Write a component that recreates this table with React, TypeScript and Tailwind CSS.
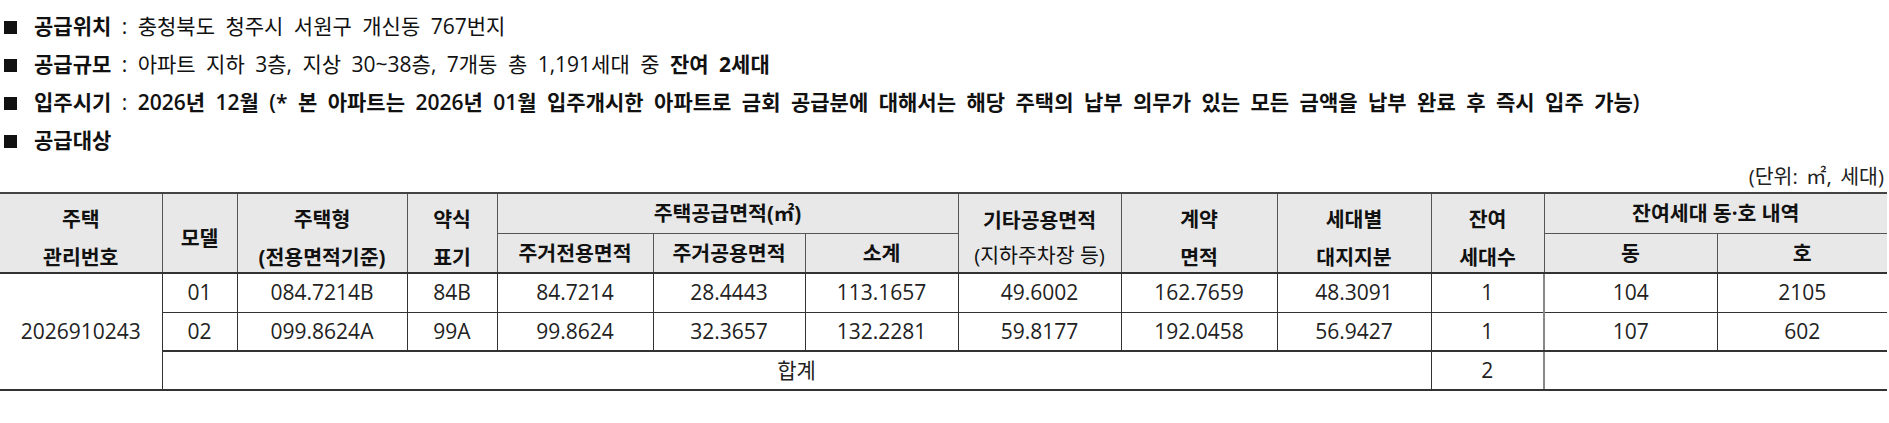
import React from "react";

const FONT = "font-['Open_Sans','Noto_Sans_CJK_KR',sans-serif]";

function Bullet({ children }: { children: React.ReactNode }) {
  return (
    <div className="flex items-center h-[38px] text-[21px] text-[#111] whitespace-nowrap [word-spacing:5px]">
      <span className="w-[13px] h-[13px] bg-[#111] ml-[4px] mr-[17px] shrink-0" />
      <span>{children}</span>
    </div>
  );
}

const th = "bg-[#e8e8e8] font-bold text-[20.5px] text-[#111] border-r border-b border-[#555] p-0 leading-[36px] align-middle";
const td = "text-[21px] text-[#222] font-normal border-r border-b border-[#333] p-0 h-[39px] text-center align-middle";
const span2 = "h-[78px] flex flex-col items-center justify-center pt-[9px] leading-[38px] whitespace-nowrap";
const tall = `${th} border-t-2 border-t-[#444] border-b-2 border-b-[#333]`;

const rows = [
  { model: "01", type: "084.7214B", abbr: "84B", a: "84.7214", b: "28.4443", c: "113.1657", d: "49.6002", e: "162.7659", f: "48.3091", n: "1", dong: "104", ho: "2105" },
  { model: "02", type: "099.8624A", abbr: "99A", a: "99.8624", b: "32.3657", c: "132.2281", d: "59.8177", e: "192.0458", f: "56.9427", n: "1", dong: "107", ho: "602" },
];

export default function App() {
  return (
    <div className={`${FONT} bg-white w-[1889px] h-[423px] overflow-hidden`}>
      <div className="pt-[8px]">
        <Bullet>
          <b className="font-bold">공급위치</b> : 충청북도 청주시 서원구 개신동 767번지
        </Bullet>
        <Bullet>
          <b className="font-bold">공급규모</b> : 아파트 지하 3층, 지상 30~38층, 7개동 총 1,191세대 중 <b className="font-bold">잔여 2세대</b>
        </Bullet>
        <Bullet>
          <span className="font-semibold">입주시기</span> :{" "}
          <span className="font-semibold">
            2026년 12월 (* 본 아파트는 2026년 01월 입주개시한 아파트로 금회 공급분에 대해서는 해당 주택의 납부 의무가 있는 모든 금액을 납부 완료 후 즉시 입주 가능)
          </span>
        </Bullet>
        <Bullet>
          <b className="font-bold">공급대상</b>
        </Bullet>
      </div>
      <div className="h-[32px] flex items-center justify-end pr-[5px] text-[20.5px] text-[#222] [word-spacing:3px]">(단위: ㎡, 세대)</div>
      <table className="border-collapse table-fixed w-[1887px] text-center">
        <colgroup>
          <col className="w-[162px]" />
          <col className="w-[75px]" />
          <col className="w-[170px]" />
          <col className="w-[90px]" />
          <col className="w-[156px]" />
          <col className="w-[152px]" />
          <col className="w-[153px]" />
          <col className="w-[163px]" />
          <col className="w-[156px]" />
          <col className="w-[154px]" />
          <col className="w-[113px]" />
          <col className="w-[173px]" />
          <col className="w-[170px]" />
        </colgroup>
        <thead>
          <tr className="h-[39px]">
            <th rowSpan={2} className={tall}>
              <div className={span2}><span>주택</span><span>관리번호</span></div>
            </th>
            <th rowSpan={2} className={tall}>
              <div className={span2}><span>모델</span></div>
            </th>
            <th rowSpan={2} className={tall}>
              <div className={span2}><span>주택형</span><span>(전용면적기준)</span></div>
            </th>
            <th rowSpan={2} className={tall}>
              <div className={span2}><span>약식</span><span>표기</span></div>
            </th>
            <th colSpan={3} className={`${th} border-t-2 border-t-[#444]`}>주택공급면적(㎡)</th>
            <th rowSpan={2} className={tall}>
              <div className="h-[78px] flex flex-col items-center justify-center pt-[9px] leading-[35px] whitespace-nowrap">
                <span>기타공용면적</span>
                <span className="font-normal">(지하주차장 등)</span>
              </div>
            </th>
            <th rowSpan={2} className={tall}>
              <div className={span2}><span>계약</span><span>면적</span></div>
            </th>
            <th rowSpan={2} className={tall}>
              <div className={span2}><span>세대별</span><span>대지지분</span></div>
            </th>
            <th rowSpan={2} className={tall}>
              <div className={span2}><span>잔여</span><span>세대수</span></div>
            </th>
            <th colSpan={2} className={`${th} border-t-2 border-t-[#444] border-r-0`}>잔여세대 동·호 내역</th>
          </tr>
          <tr className="h-[39px]">
            <th className={`${th} border-b-2 border-b-[#333]`}>주거전용면적</th>
            <th className={`${th} border-b-2 border-b-[#333]`}>주거공용면적</th>
            <th className={`${th} border-b-2 border-b-[#333]`}>소계</th>
            <th className={`${th} border-b-2 border-b-[#333]`}>동</th>
            <th className={`${th} border-b-2 border-b-[#333] border-r-0`}>호</th>
          </tr>
        </thead>
        <tbody>
          {rows.map((r, i) => {
            const last = i === rows.length - 1;
            const b = last ? "border-b-2 border-b-[#333]" : "";
            return (
              <tr key={r.model} className="h-[39px]">
                {i === 0 && (
                  <td rowSpan={3} className={`${td} border-b-2 border-b-[#333]`}>2026910243</td>
                )}
                <td className={`${td} ${b}`}>{r.model}</td>
                <td className={`${td} ${b}`}>{r.type}</td>
                <td className={`${td} ${b}`}>{r.abbr}</td>
                <td className={`${td} ${b}`}>{r.a}</td>
                <td className={`${td} ${b}`}>{r.b}</td>
                <td className={`${td} ${b}`}>{r.c}</td>
                <td className={`${td} ${b}`}>{r.d}</td>
                <td className={`${td} ${b}`}>{r.e}</td>
                <td className={`${td} ${b}`}>{r.f}</td>
                <td className={`${td} ${b} border-r-2 border-r-[#888]`}>{r.n}</td>
                <td className={`${td} ${b}`}>{r.dong}</td>
                <td className={`${td} ${b} border-r-0`}>{r.ho}</td>
              </tr>
            );
          })}
          <tr className="h-[39px]">
            <td colSpan={9} className={`${td} border-b-2 border-b-[#333]`}>합계</td>
            <td className={`${td} border-b-2 border-b-[#333] border-r-2 border-r-[#888]`}>2</td>
            <td colSpan={2} className={`${td} border-b-2 border-b-[#333] border-r-0`}></td>
          </tr>
        </tbody>
      </table>
    </div>
  );
}
